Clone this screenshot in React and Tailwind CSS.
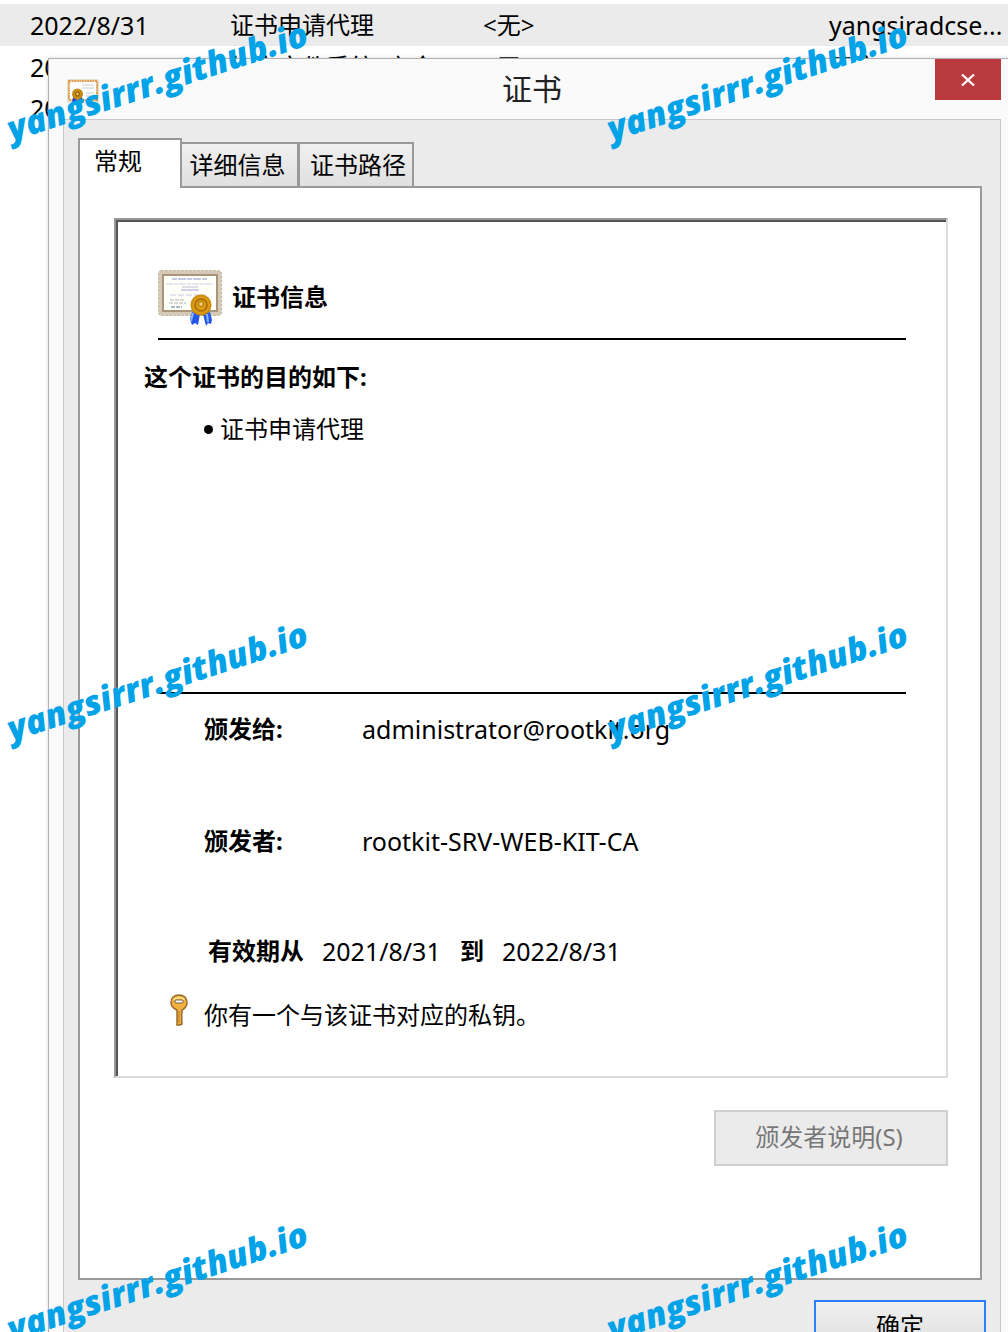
const rows = [
  { date: "2022/8/31", purpose: "证书申请代理", name: "<无>", template: "yangsiradcse..." },
  { date: "2022/8/31", purpose: "加密文件系统, 安全...", name: "<无>", template: "用户" },
  { date: "2022/8/31", purpose: "", name: "", template: "" },
];

function CertificateIcon() {
  return (
    <svg viewBox="0 0 64 56" className="h-14 w-16 shrink-0" aria-hidden="true">
      <rect x="0.5" y="0.5" width="63" height="45" rx="3" fill="#d6c9b8" stroke="#b8ab98" strokeDasharray="2 2" />
      <rect x="4" y="4" width="56" height="38" fill="#a8957c" />
      <rect x="6" y="6" width="52" height="34" fill="#fffffa" />
      <g strokeWidth="1.600">
        <path d="M14 9h36" stroke="#b8b8d4" strokeDasharray="5 1 8 1" />
        <path d="M8 14h48" stroke="#dedee8" strokeDasharray="7 1 4 1" />
        <path d="M24 17h16" stroke="#d6d6e4" />
        <path d="M23 20h18" stroke="#c3c3da" />
        <path d="M12 25h36" stroke="#dcdce8" strokeDasharray="6 2" />
        <path d="M12 30h14M11 33h17" stroke="#cacacc" strokeDasharray="4 1" />
        <path d="M13 37h11" stroke="#8f9fb8" strokeDasharray="4 1" />
      </g>
      <path d="M34 42l8 2-2 11-3-2-3 2-2-6z" fill="#2456e8" />
      <path d="M45 44l7-2 2 8-1 4-3-1-2 3z" fill="#2456e8" />
      <path d="M35 43l-2 8M49 44l1 8" stroke="#86b4ff" strokeWidth="2" />
      <circle cx="43" cy="35" r="10.500" fill="#c98a0c" />
      <circle cx="43" cy="35" r="9" fill="#dc9c14" />
      <circle cx="43" cy="35" r="6" fill="none" stroke="#a66a08" strokeWidth="1.500" />
      <circle cx="43" cy="34" r="2.500" fill="#f3cd6a" stroke="#a66a08" />
    </svg>
  );
}

function TitleIcon() {
  return (
    <svg viewBox="0 0 32 24" className="h-6 w-8" aria-hidden="true">
      <rect width="32" height="24" rx="2" fill="#e5dfd0" />
      <rect x="2" y="2" width="28" height="19" fill="#fff" stroke="#e0a050" strokeWidth="2" strokeDasharray="2 0.6" />
      <path d="M15 6h12M15 9h12M19 14h8M19 17h8" stroke="#c9c9c9" />
      <path d="M6 18l4 1v5H5zM11 19l4-1 1 6h-4z" fill="#1f45dc" />
      <circle cx="10.500" cy="15" r="5.500" fill="#c58a10" />
      <circle cx="10.500" cy="15" r="2" fill="#e8b848" stroke="#7d5206" />
    </svg>
  );
}

function KeyIcon() {
  return (
    <svg viewBox="0 0 18 32" className="h-8 w-[18px]" aria-hidden="true">
      <path
        d="M9 1c5 0 8 3 8 7.500 0 4-2 6-5 7.500V19l-0.500 2 0.500 2-0.500 2 0.500 2v3l-2 1H7V16C3 14.500 1 12.500 1 8.500 1 4 4 1 9 1z"
        fill="#f0b23c"
        stroke="#9a6a2c"
        strokeWidth="1.500"
      />
      <path d="M4 6c1-3 9-3 10 0" fill="none" stroke="#ffe68c" strokeWidth="1.500" />
      <rect x="5" y="6" width="8" height="3" rx="1" fill="#fff" stroke="#775f50" />
      <path d="M9 17v12" stroke="#b67a28" />
    </svg>
  );
}

function Field({ label, children }) {
  return (
    <div className="flex">
      <dt className="w-[158px] font-bold">{label}</dt>
      <dd className="text-[25px] leading-8">{children}</dd>
    </div>
  );
}

function Watermarks() {
  return (
    <div
      aria-hidden="true"
      className="pointer-events-none absolute inset-x-0 top-0 z-20 grid grid-cols-[repeat(2,600px)] auto-rows-[600px]"
    >
      {[0, 1, 2, 3, 4, 5].map((n) => (
        <div key={n} className="pt-[108px] pl-3.5">
          <span className="inline-block origin-bottom-left -rotate-[18deg] font-['Open_Sans',sans-serif] text-[34px] leading-10 font-extrabold whitespace-nowrap text-[#00a2e8] italic">
            yangsirrr.github.io
          </span>
        </div>
      ))}
    </div>
  );
}

export default function App() {
  return (
    <div className="relative h-screen overflow-hidden bg-white font-['Noto_Sans','Noto_Sans_CJK_SC',sans-serif] text-2xl leading-8 text-black">
      <table className="mt-1 w-full table-fixed border-collapse">
        <colgroup>
          <col className="w-[230px]" />
          <col className="w-[253px]" />
          <col />
          <col className="w-[179px]" />
        </colgroup>
        <tbody>
          {rows.map((row, i) => (
            <tr key={i} className={i === 0 ? "h-[42px] bg-[#ebebeb]" : "h-[41px]"}>
              <td className="pl-[30px] text-[25px] leading-8">{row.date}</td>
              <td>{row.purpose}</td>
              <td>{row.name}</td>
              <td className="text-[25px] leading-8 whitespace-nowrap">{row.template}</td>
            </tr>
          ))}
        </tbody>
      </table>

      <section
        role="dialog"
        aria-labelledby="title"
        className="absolute top-[58px] -right-2 left-12 z-10 border border-[#b0b0b0] bg-[#fafafa] px-[14px] shadow-[0_0_4px_rgba(0,0,0,0.15)]"
      >
        <header className="grid h-[60px] grid-cols-[66px_1fr_66px] items-start">
          <div className="pt-5 pl-1">
            <TitleIcon />
          </div>
          <h1 id="title" className="pt-2.5 text-center text-[30px] leading-10 text-[#222]">
            证书
          </h1>
          <button type="button" aria-label="关闭" className="flex h-[41px] w-[66px] items-center justify-center bg-[#b9393e]">
            <svg viewBox="0 0 14 12" className="h-3 w-[14px]" aria-hidden="true">
              <path d="M1 0.500L13 11.500M13 0.500L1 11.500" stroke="#fff" strokeWidth="2.200" />
            </svg>
          </button>
        </header>

        <div className="border border-[#c8c8c8] bg-[#ebebeb] px-[14px] pt-[18px] pb-8">
          <div role="tablist" className="relative z-10 -mb-0.5 flex items-end">
            <button
              type="button"
              role="tab"
              aria-selected="true"
              className="h-[50px] w-[104px] border-2 border-b-0 border-[#999] bg-white pr-6 pb-1.5"
            >
              常规
            </button>
            <button
              type="button"
              role="tab"
              aria-selected="false"
              className="-ml-0.5 h-[46px] w-[119px] border-2 border-[#999] bg-linear-to-b from-[#f0f0f0] to-[#e0e0e0] pr-1"
            >
              详细信息
            </button>
            <button
              type="button"
              role="tab"
              aria-selected="false"
              className="-ml-px h-[46px] w-[116px] border-2 border-[#999] bg-linear-to-b from-[#f0f0f0] to-[#e0e0e0] pl-1"
            >
              证书路径
            </button>
          </div>

          <div role="tabpanel" className="mr-1 border-2 border-[#999] bg-white pt-[30px] pr-8 pb-28 pl-[34px]">
            <div className="border-2 border-t-[#999] border-r-[#dcdcdc] border-b-[#dcdcdc] border-l-[#999]">
              <div className="border-t-2 border-l-2 border-[#555] pr-10 pb-[45px] pl-10">
                <div className="flex items-center gap-2.5 border-b-2 border-black pt-12 pb-3">
                  <CertificateIcon />
                  <h2 className="pb-0.5 font-bold">证书信息</h2>
                </div>
                <p className="-ml-3.5 pt-[21px] font-bold">这个证书的目的如下:</p>
                <ul className="h-[299px] pt-5 pl-[46px]">
                  <li className="flex items-center gap-[7px]">
                    <span className="size-[9px] rounded-full bg-black" />
                    证书申请代理
                  </li>
                </ul>
                <dl className="border-t-2 border-black pt-[19px] pl-[46px]">
                  <Field label="颁发给:">administrator@rootkit.org</Field>
                  <div className="h-20" />
                  <Field label="颁发者:">rootkit-SRV-WEB-KIT-CA</Field>
                </dl>
                <p className="flex pt-[78px] pl-[50px]">
                  <b className="w-[114px]">有效期从</b>
                  <span className="w-[138px] text-[25px] leading-8">2021/8/31</span>
                  <b className="w-[42px]">到</b>
                  <span className="text-[25px] leading-8">2022/8/31</span>
                </p>
                <p className="flex gap-4 pt-[27px] pl-3">
                  <KeyIcon />
                  <span className="pt-[5px]">你有一个与该证书对应的私钥。</span>
                </p>
              </div>
            </div>
            <div className="flex justify-end pt-8">
              <button type="button" disabled className="h-14 w-[234px] border-2 border-[#cfcfcf] bg-[#ebebeb] pr-1 pb-0.5 text-[#777]">
                颁发者说明(S)
              </button>
            </div>
          </div>

          <div className="flex justify-end pt-5">
            <button type="button" className="h-14 w-[172px] border-2 border-[#2a80ff] bg-linear-to-b from-[#f0f0f0] to-[#dcdcdc] pb-1">
              确定
            </button>
          </div>
        </div>
      </section>
      <Watermarks />
    </div>
  );
}
